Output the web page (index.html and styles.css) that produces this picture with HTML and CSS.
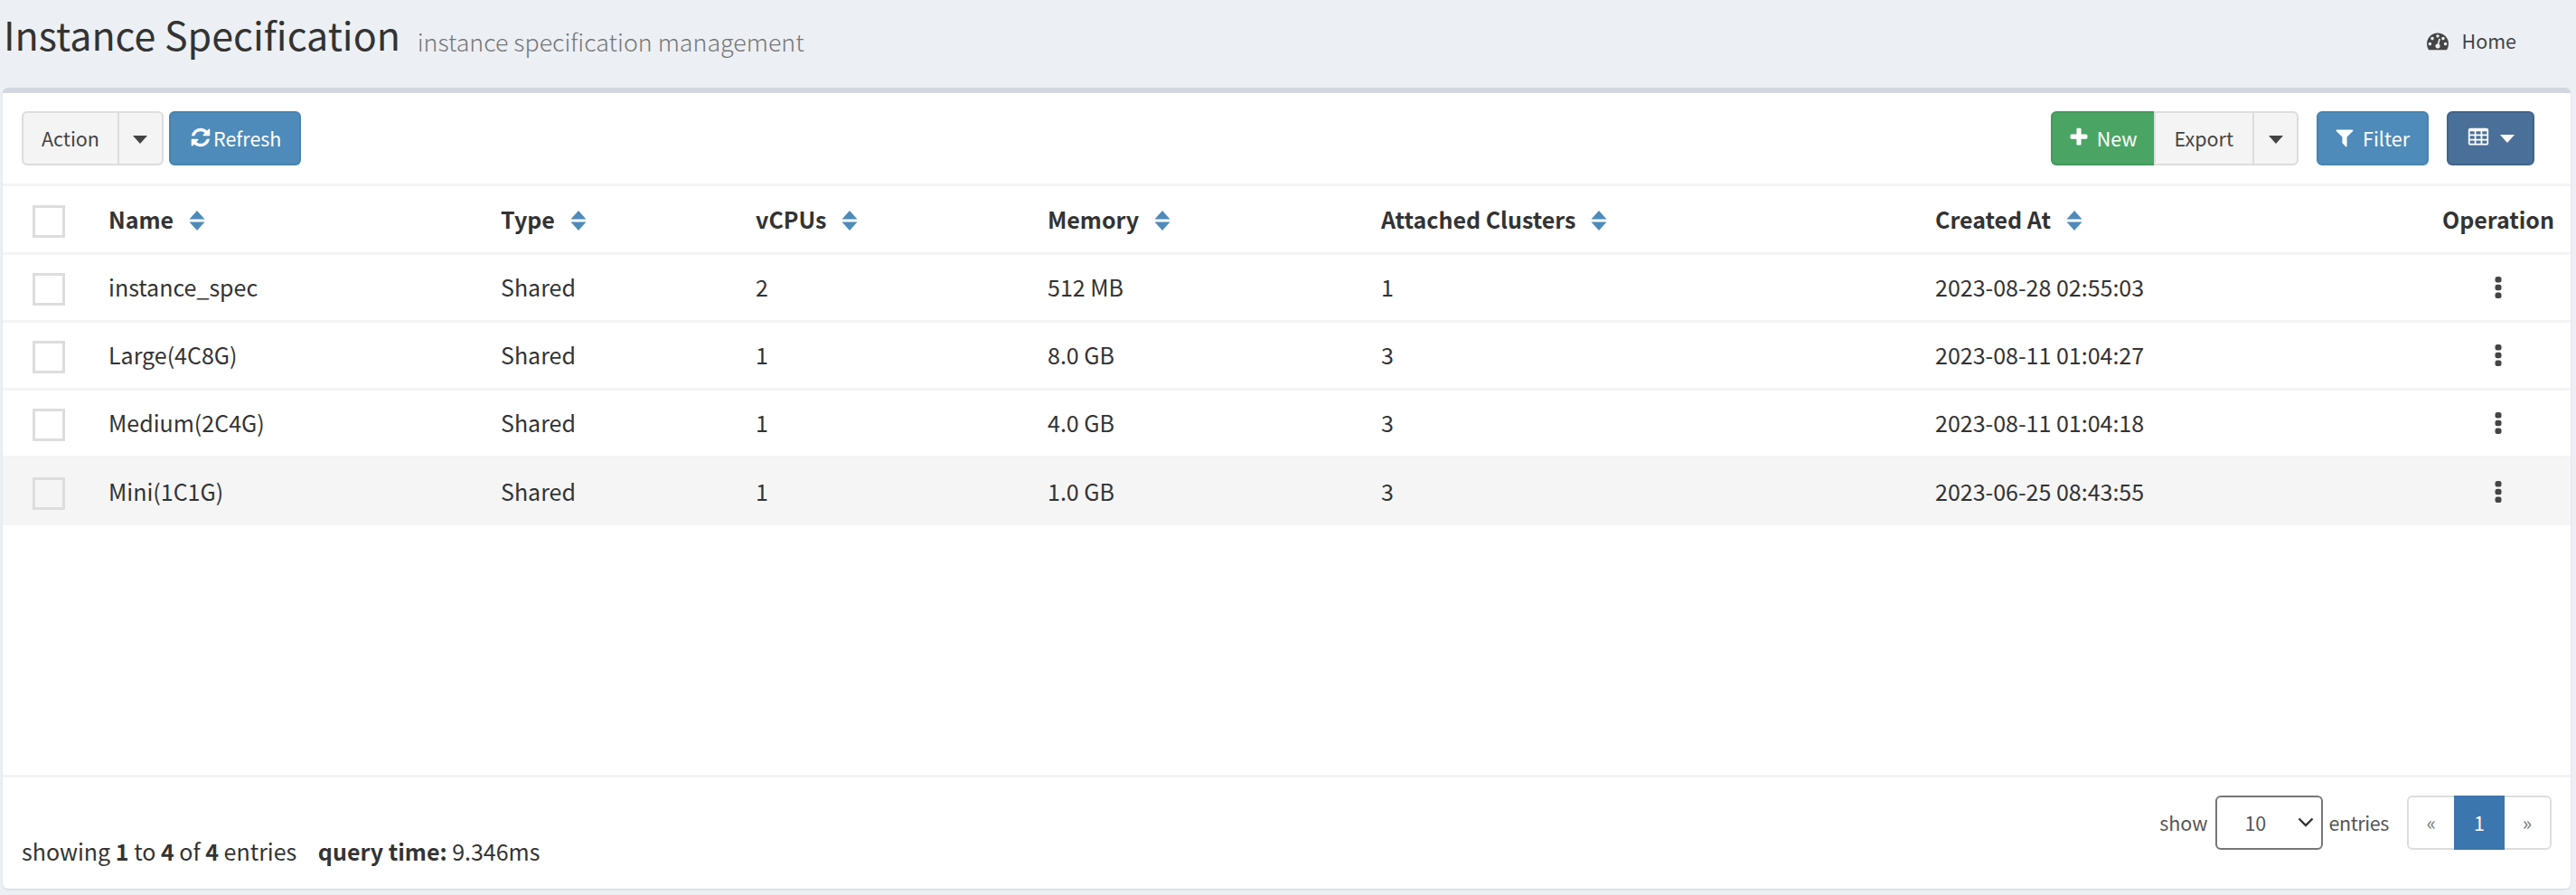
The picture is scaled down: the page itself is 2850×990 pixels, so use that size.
FILE: index.html
```html
<!DOCTYPE html>
<html lang="en">
<head>
    <meta charset="utf-8">
    <title>Instance Specification</title>
    <link rel="stylesheet" href="styles.css">
</head>
<body>

<svg class="sprites" aria-hidden="true">
    <symbol id="i-refresh" viewBox="0 0 1792 1792"><path d="M1639 1056q0 5-1 7-64 268-268 434.5t-478 166.5q-146 0-282.5-55t-243.5-157l-129 129q-19 19-45 19t-45-19-19-45v-448q0-26 19-45t45-19h448q26 0 45 19t19 45-19 45l-137 137q71 66 161 102t187 36q134 0 250-65t186-179q11-17 53-117 8-23 30-23h192q13 0 22.5 9.5t9.5 22.5zm25-800v448q0 26-19 45t-45 19h-448q-26 0-45-19t-19-45 19-45l138-138q-148-137-349-137-134 0-250 65t-186 179q-11 17-53 117-8 23-30 23h-199q-13 0-22.5-9.5t-9.5-22.5v-7q65-268 270-434.5t480-166.5q146 0 284 55.5t245 156.5l130-129q19-19 45-19t45 19 19 45z"/></symbol>
    <symbol id="i-plus" viewBox="0 0 1792 1792"><path d="M1600 736v192q0 40-28 68t-68 28h-416v416q0 40-28 68t-68 28h-192q-40 0-68-28t-28-68v-416h-416q-40 0-68-28t-28-68v-192q0-40 28-68t68-28h416v-416q0-40 28-68t68-28h192q40 0 68 28t28 68v416h416q40 0 68 28t28 68z"/></symbol>
    <symbol id="i-filter" viewBox="0 0 1792 1792"><path d="M1595 295q17 41-14 70l-493 493v742q0 42-39 59-13 5-25 5-27 0-45-19l-256-256q-19-19-19-45v-486l-493-493q-31-29-14-70 17-39 59-39h1280q42 0 59 39z"/></symbol>
    <symbol id="i-table" viewBox="0 0 1792 1792"><path d="M576 1376v-192q0-14-9-23t-23-9h-320q-14 0-23 9t-9 23v192q0 14 9 23t23 9h320q14 0 23-9t9-23zm0-384v-192q0-14-9-23t-23-9h-320q-14 0-23 9t-9 23v192q0 14 9 23t23 9h320q14 0 23-9t9-23zm512 384v-192q0-14-9-23t-23-9h-320q-14 0-23 9t-9 23v192q0 14 9 23t23 9h320q14 0 23-9t9-23zm-512-768v-192q0-14-9-23t-23-9h-320q-14 0-23 9t-9 23v192q0 14 9 23t23 9h320q14 0 23-9t9-23zm512 384v-192q0-14-9-23t-23-9h-320q-14 0-23 9t-9 23v192q0 14 9 23t23 9h320q14 0 23-9t9-23zm512 384v-192q0-14-9-23t-23-9h-320q-14 0-23 9t-9 23v192q0 14 9 23t23 9h320q14 0 23-9t9-23zm-512-768v-192q0-14-9-23t-23-9h-320q-14 0-23 9t-9 23v192q0 14 9 23t23 9h320q14 0 23-9t9-23zm512 384v-192q0-14-9-23t-23-9h-320q-14 0-23 9t-9 23v192q0 14 9 23t23 9h320q14 0 23-9t9-23zm0-384v-192q0-14-9-23t-23-9h-320q-14 0-23 9t-9 23v192q0 14 9 23t23 9h320q14 0 23-9t9-23zm128-320v1088q0 66-47 113t-113 47h-1344q-66 0-113-47t-47-113v-1088q0-66 47-113t113-47h1344q66 0 113 47t47 113z"/></symbol>
    <symbol id="i-dashboard" viewBox="0 0 1792 1792"><path d="M384 1152q0-53-37.5-90.5t-90.5-37.5-90.5 37.5-37.5 90.5 37.5 90.5 90.5 37.5 90.5-37.5 37.5-90.5zm192-448q0-53-37.5-90.5t-90.5-37.5-90.5 37.5-37.5 90.5 37.5 90.5 90.5 37.5 90.5-37.5 37.5-90.5zm428 481l101-382q6-26-7.5-48.5t-38.5-29.5-48 6.5-30 39.5l-101 382q-60 5-107 43.5t-63 98.5q-20 77 20 146t117 89 146-20 89-117q16-60-6-117t-72-91zm660-33q0-53-37.5-90.5t-90.5-37.5-90.5 37.5-37.5 90.5 37.5 90.5 90.5 37.5 90.5-37.5 37.5-90.5zm-640-640q0-53-37.5-90.5t-90.5-37.5-90.5 37.5-37.5 90.5 37.5 90.5 90.5 37.5 90.5-37.5 37.5-90.5zm448 192q0-53-37.5-90.5t-90.5-37.5-90.5 37.5-37.5 90.5 37.5 90.5 90.5 37.5 90.5-37.5 37.5-90.5zm320 448q0 261-141 483-19 29-54 29h-1402q-35 0-54-29-141-221-141-483 0-182 71-348t191-286 286-191 348-71 348 71 286 191 191 286 71 348z"/></symbol>
    <symbol id="i-sort" viewBox="0 0 18 22"><path d="M9 0l8.500 9.500h-17zM9 22l8.500-9.500h-17z"/></symbol>
    <symbol id="i-dots" viewBox="0 0 8 24"><rect x="0.500" y="0" width="7" height="6.500" rx="2.500"/><rect x="0.500" y="8.800" width="7" height="6.500" rx="2.500"/><rect x="0.500" y="17.500" width="7" height="6.500" rx="2.500"/></symbol>
</svg>

<header class="page-head">
    <h1>Instance Specification <small>instance specification management</small></h1>
    <a class="crumb" href="#"><svg class="icon"><use href="#i-dashboard"/></svg> Home</a>
</header>

<main class="box">
    <div class="toolbar">
        <div class="tools">
            <div class="btn-group">
                <a class="btn btn-action">Action</a>
                <a class="btn caret-btn"><i class="caret"></i></a>
            </div>
            <a class="btn btn-blue btn-refresh"><svg class="icon"><use href="#i-refresh"/></svg> Refresh</a>
        </div>
        <div class="tools tools-right">
            <div class="btn-group">
                <a class="btn btn-green"><svg class="icon"><use href="#i-plus"/></svg> New</a>
                <a class="btn btn-export">Export</a>
                <a class="btn caret-btn"><i class="caret"></i></a>
            </div>
            <a class="btn btn-blue btn-filter"><svg class="icon"><use href="#i-filter"/></svg> Filter</a>
            <a class="btn btn-navy"><svg class="icon"><use href="#i-table"/></svg> <i class="caret"></i></a>
        </div>
    </div>

    <table class="grid">
        <colgroup>
            <col class="c-check"><col class="c-name"><col class="c-type"><col class="c-cpu"><col class="c-mem"><col class="c-clusters"><col class="c-created"><col>
        </colgroup>
        <thead>
            <tr>
                <th><span class="check"></span></th>
                <th>Name <svg class="sort"><use href="#i-sort"/></svg></th>
                <th>Type <svg class="sort"><use href="#i-sort"/></svg></th>
                <th>vCPUs <svg class="sort"><use href="#i-sort"/></svg></th>
                <th>Memory <svg class="sort"><use href="#i-sort"/></svg></th>
                <th>Attached Clusters <svg class="sort"><use href="#i-sort"/></svg></th>
                <th>Created At <svg class="sort"><use href="#i-sort"/></svg></th>
                <th class="op">Operation</th>
            </tr>
        </thead>
        <tbody>
            <tr>
                <td><span class="check"></span></td>
                <td>instance_spec</td><td>Shared</td><td>2</td><td>512 MB</td><td>1</td><td>2023-08-28 02:55:03</td>
                <td class="op"><svg class="dots"><use href="#i-dots"/></svg></td>
            </tr>
            <tr>
                <td><span class="check"></span></td>
                <td>Large(4C8G)</td><td>Shared</td><td>1</td><td>8.0 GB</td><td>3</td><td>2023-08-11 01:04:27</td>
                <td class="op"><svg class="dots"><use href="#i-dots"/></svg></td>
            </tr>
            <tr>
                <td><span class="check"></span></td>
                <td>Medium(2C4G)</td><td>Shared</td><td>1</td><td>4.0 GB</td><td>3</td><td>2023-08-11 01:04:18</td>
                <td class="op"><svg class="dots"><use href="#i-dots"/></svg></td>
            </tr>
            <tr class="hover">
                <td><span class="check"></span></td>
                <td>Mini(1C1G)</td><td>Shared</td><td>1</td><td>1.0 GB</td><td>3</td><td>2023-06-25 08:43:55</td>
                <td class="op"><svg class="dots"><use href="#i-dots"/></svg></td>
            </tr>
        </tbody>
    </table>

    <footer class="box-foot">
        <div class="summary">showing <b>1</b> to <b>4</b> of <b>4</b> entries <b class="qt">query time:</b> 9.346ms</div>
        <div class="paging">
            <span class="show">show</span>
            <select class="per-page"><option>10</option></select>
            <span class="entries">entries</span>
            <div class="pages">
                <a>«</a>
                <a class="active">1</a>
                <a>»</a>
            </div>
        </div>
    </footer>
</main>

</body>
</html>
```

FILE: styles.css
```css
:root {
    --text: #333;
    --line: #f4f4f4;
    --btn-line: #ddd;
    --blue: #4e8bba;
}

* {
    box-sizing: border-box;
}

body {
    margin: 0;
    height: 990px;
    display: flex;
    flex-direction: column;
    overflow: hidden;

    font-family: "Noto Sans CJK SC", "Source Sans Pro", "Noto Sans", sans-serif;
    font-size: 25px;
    color: var(--text);
    background: #ecf0f5;
}

a {
    color: inherit;
    text-decoration: none;
}

.sprites {
    display: none;
}

.icon {
    width: 24px;
    height: 24px;
    fill: currentColor;
    vertical-align: -3px;
}

/* page header */
.page-head {
    height: 97px;
    flex: none;
    display: flex;
    justify-content: space-between;
    padding: 0 66px 0 4px;
}

.page-head h1 {
    margin: 10px 0 0;
    font-size: 43px;
    font-weight: 400;
    line-height: 54px;
}

.page-head small {
    margin-left: 9px;
    font-size: 26.8px;
    font-weight: 300;
    color: #777;
    vertical-align: -1px;
}

.crumb {
    margin-top: 28px;
    font-size: 21.5px;
    line-height: 34px;
    color: #444;
}

.crumb .icon {
    margin-right: 10px;
}

/* box */
.box {
    flex: 1;
    display: flex;
    flex-direction: column;
    margin: 0 6px 7px 3px;
    background: #fff;
    border-top: 6px solid #d2d6de;
    border-radius: 6px;
    box-shadow: 0 1px 2px rgba(0, 0, 0, .12);
}

.toolbar {
    height: 100px;
    flex: none;
    display: flex;
    justify-content: space-between;
    padding: 20px 40px 0 21px;
}

.tools {
    display: flex;
    height: 60px;
    gap: 6px;
}

.tools-right {
    gap: 20px;
}

.btn-group {
    display: flex;
}

.btn {
    display: flex;
    align-items: center;
    justify-content: center;
    gap: 8px;
    padding: 0 21px 2px;
    border: 2px solid var(--btn-line);
    background: #f4f4f4;
    font-size: 21.5px;
    color: #444;
}

.btn-group .btn {
    border-radius: 0;
}

.btn-group .btn + .btn {
    margin-left: -2px;
}

.btn-group .btn:first-child {
    border-radius: 6px 0 0 6px;
}

.btn-group .btn:last-child {
    border-radius: 0 6px 6px 0;
}

.btn-action {
    padding: 0 20px 2px;
}

.btn-export {
    padding: 0 21px 2px;
}

.caret-btn {
    width: 51px;
    padding: 0;
}

.caret {
    width: 0;
    height: 0;
    margin-top: 3px;
    border-top: 9px solid currentColor;
    border-left: 8px solid transparent;
    border-right: 8px solid transparent;
}

.btn-blue,
.btn-navy {
    border-radius: 6px;
    color: #fff;
}

.btn-blue {
    background: var(--blue);
    border-color: #4883b0;
}

.btn-navy {
    padding: 0 20px 2px 21px;
    background: #4a7099;
    border-color: #3f6489;
    gap: 12px;
}

.btn-green {
    padding: 0 18px 2px 17px;
    background: #4aa564;
    border-color: #429a5a;
    color: #fff;
}

.btn-refresh {
    padding: 0 20px 2px 21px;
    gap: 2px;
}

.btn-filter {
    padding: 0 19px 2px 17px;
}

/* table */
.grid {
    flex: none;
    width: 100%;
    table-layout: fixed;
    border-collapse: collapse;
}

.c-check { width: 117px; }
.c-name { width: 434px; }
.c-type { width: 282px; }
.c-cpu { width: 323px; }
.c-mem { width: 369px; }
.c-clusters { width: 613px; }
.c-created { width: 543px; }

.grid th,
.grid td {
    height: 75px;
    padding: 0 0 2px;
    text-align: left;
    vertical-align: middle;
    border-top: 3px solid var(--line);
}

.grid th {
    height: 76px;
    font-weight: 700;
}

.grid th:first-child,
.grid td:first-child,
.grid td.op {
    padding: 0;
}

.grid .hover td {
    background: #f5f5f5;
}

.grid .op {
    text-align: center;
}

.check {
    display: block;
    width: 36px;
    height: 36px;
    margin: 4px 0 0 33px;
    border: 3px solid #ddd;
}

.sort {
    width: 18px;
    height: 22px;
    margin-left: 11px;
    fill: var(--blue);
    vertical-align: -2px;
}

.dots {
    width: 8px;
    height: 24px;
    fill: #444;
    vertical-align: -1px;
}

/* footer */
.box-foot {
    flex: 1;
    display: flex;
    justify-content: space-between;
    margin-top: 276px;
    padding: 0 21px;
    border-top: 3px solid var(--line);
}

.summary {
    align-self: flex-end;
    margin-bottom: 24px;
}

.qt {
    margin-left: 18px;
}

.paging {
    display: flex;
    align-items: center;
    align-self: flex-start;
    gap: 6px;
    margin-top: 20px;
    font-size: 21.5px;
    color: #555;
}

.show {
    margin-right: 3px;
}

.entries {
    letter-spacing: -.4px;
}

.per-page {
    width: 119px;
    height: 60px;
    padding-left: 30px;
    appearance: none;
    font: inherit;
    color: #555;
    background: #fff url("data:image/svg+xml,%3Csvg xmlns='http://www.w3.org/2000/svg' width='18' height='11'%3E%3Cpath d='M1.500 1.500l7.500 7.500 7.500-7.500' fill='none' stroke='%23333' stroke-width='2.400'/%3E%3C/svg%3E") no-repeat right 8px center;
    border: 2px solid #767676;
    border-radius: 6px;
}

.pages {
    display: flex;
    height: 60px;
    margin-left: 14px;
    border: 2px solid var(--btn-line);
    border-radius: 6px;
}

.pages a {
    width: 50px;
    display: flex;
    align-items: center;
    justify-content: center;
    color: #777;
}

.pages .active {
    width: 56px;
    margin: -2px 0;
    background: #3c76ae;
    color: #fff;
}
```
